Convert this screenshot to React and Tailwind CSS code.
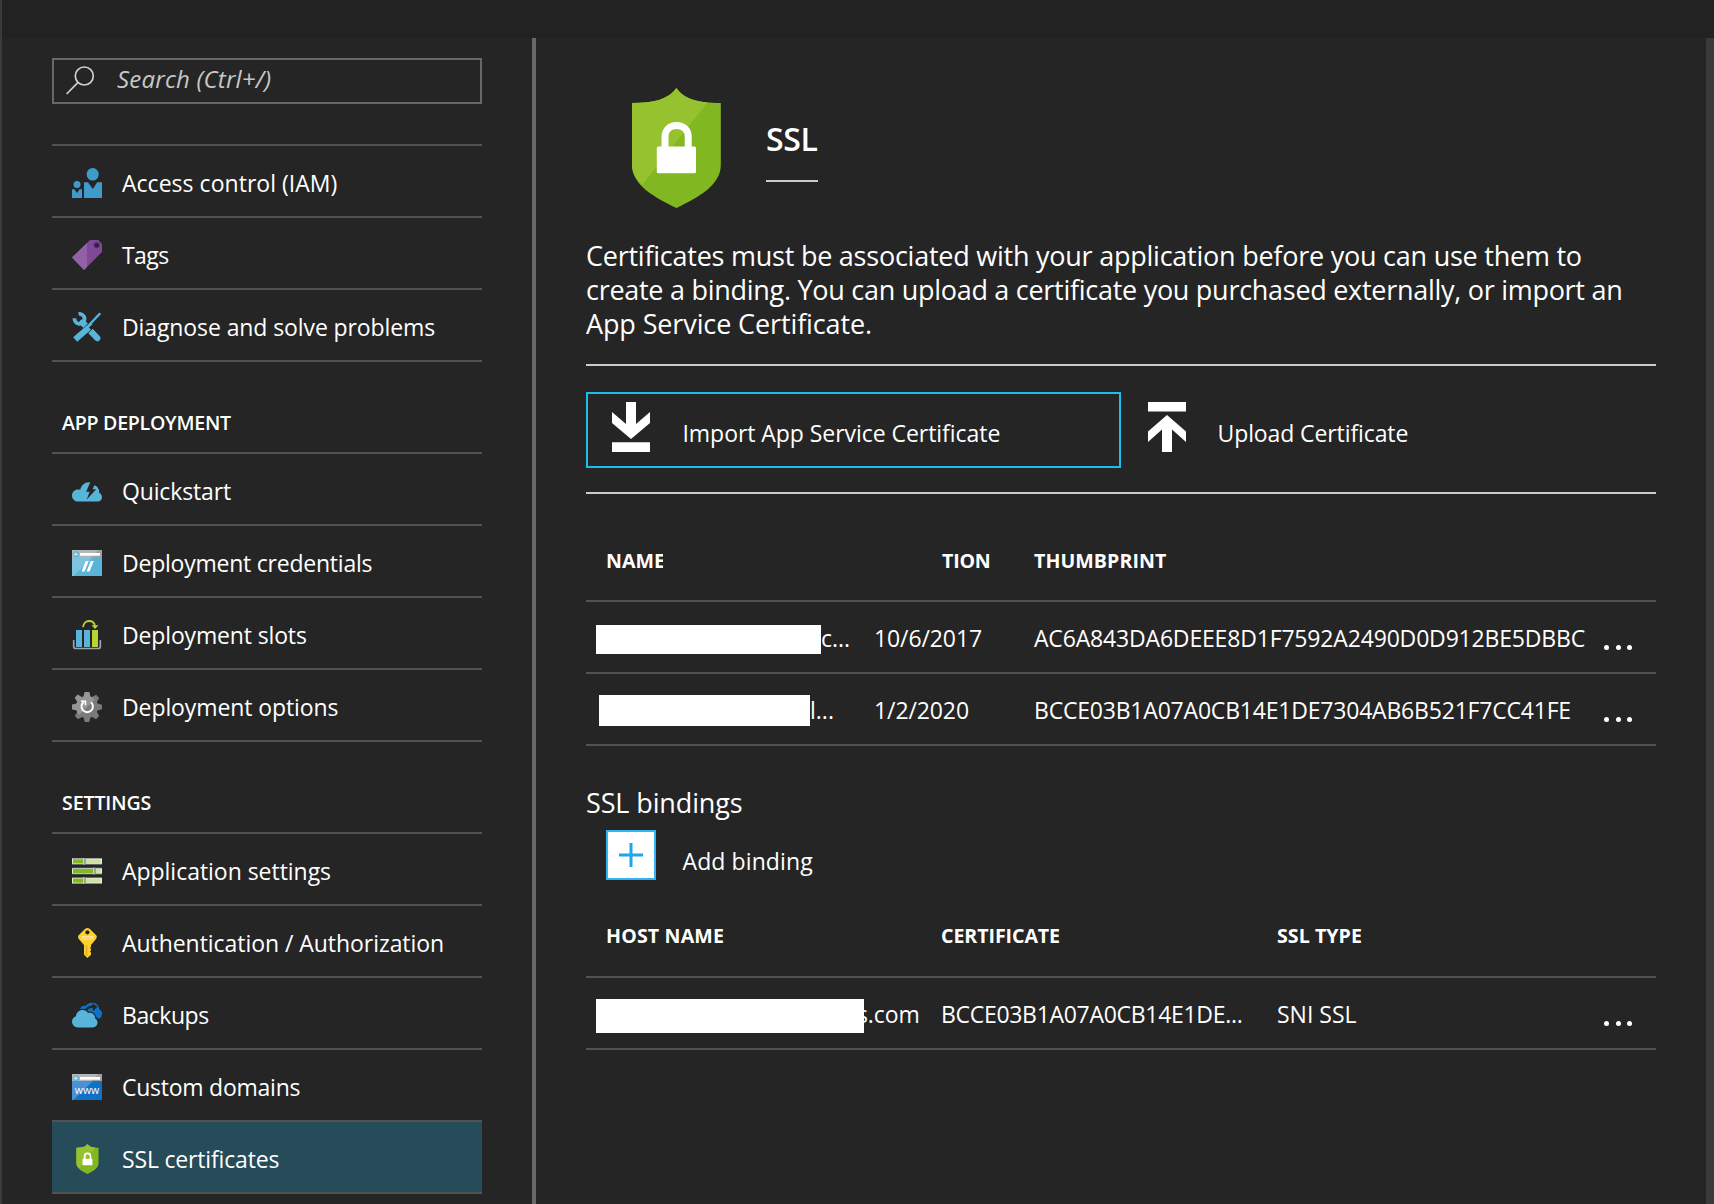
import React from "react";

const Search = () => (
  <svg width="30" height="30" viewBox="0 0 30 30" fill="none" stroke="#d0d0d0" strokeWidth="1.7">
    <circle cx="19.3" cy="10" r="9" />
    <path d="M12.8 16.7 1.6 28" />
  </svg>
);

const People = () => (
  <svg width="30" height="30" viewBox="0 0 30 30" fill="#3f9bc9">
    <ellipse cx="20.7" cy="6.3" rx="6" ry="6.3" />
    <path d="M12 14.3h4L20.8 21l4.4-6.700H30V30H12z" />
    <circle cx="5" cy="16.4" r="3.5" />
    <path d="M0 21.3h2.4L5 25l2.6-3.7H10V30H0z" />
  </svg>
);

const Tag = () => (
  <svg width="30" height="30" viewBox="0 0 30 30">
    <path d="M18 0h8.5L30 4.2V12L12 30 0 17.5z" fill="#804998" />
    <path d="M15 3v24l-3 3L0 17.5z" fill="#9160a6" />
    <circle cx="24.7" cy="5.3" r="3" fill="#55296b" />
    <circle cx="24.7" cy="5.3" r="1.8" fill="#252525" />
  </svg>
);

const Tools = () => (
  <svg width="30" height="30" viewBox="0 0 30 30" fill="none" stroke="#59b4d9">
    <path d="M2.6 6.2A5 5 0 1 0 6.600 2" strokeWidth="3.8" />
    <path d="M10.5 10.5 25.3 26.2" strokeWidth="6.2" strokeLinecap="round" />
    <path d="M12.5 17.6 19.5 10.6" stroke="#252525" strokeWidth="4" />
    <path d="M28.2 1.2 14.5 15.8" strokeWidth="2.4" />
    <path d="M19.6 13.8 12 21" stroke="#252525" strokeWidth="6" />
    <path d="M19.6 11.2 14.5 16" strokeWidth="2.6" />
    <path d="M17 15.4 3.2 27.6" strokeWidth="6" />
  </svg>
);

const Bolt = () => (
  <svg width="30" height="30" viewBox="0 0 30 30">
    <path
      d="M6.2 25.5C2.6 25.5 0 22.8 0 19.4c0-3.4 2.8-6 6-6 .8 0 1.6.1 2.3.4C9 9.6 12.6 6.2 17 6.2c1 0 1.3.1 2 .3L27 14.5c.4 1 .3 1.7.1 2.6 1.8.5 2.9 2.2 2.9 4.1 0 2.4-1.8 4.3-4.2 4.3z"
      fill="#59b4d9"
    />
    <path d="M22.2 8.8c2.8 1.3 4.8 3.7 5 7.2l-4-3z" fill="#59b4d9" />
    <path d="M18.5 5.5 14.2 15.8h3.5l-3 7.7 9.5-10.3h-3.7L23 8z" fill="#252525" />
  </svg>
);

const Browser = ({ body, light, children }) => (
  <svg width="30" height="30" viewBox="0 0 30 30">
    <path d="M0 2h30v7H0z" fill="#a0a1a2" />
    <path d="M0 2h26l-7 7H0z" fill="#b5b6b7" />
    <path d="M0 9h30v19H0z" fill={body} />
    <path d="M0 9h21L1.5 28H0z" fill={light} />
    <circle cx="4" cy="6.2" r="3" fill="#59b4d9" />
    <path d="M6 6.2H2.6M4.2 4.5 2.5 6.2l1.7 1.7" stroke="#fff" strokeWidth="0.9" fill="none" />
    <path d="M8 5h20v2.7H8z" fill="#fff" />
    {children}
  </svg>
);

const Slots = () => (
  <svg width="30" height="30" viewBox="0 0 30 30">
    <path d="M1.7 20v6.5a2 2 0 0 0 2 2h22.6a2 2 0 0 0 2-2V20" fill="none" stroke="#a0a1a2" strokeWidth="1.7" />
    <path d="M4 10h6v17H4zM12 10h6v17h-6z" fill="#59b4d9" />
    <path d="M20 10h6v17h-6z" fill="#b8d432" />
    <path d="M11 7.2C11.5 3.5 14 1 17 1s5.5 2 6 5" fill="none" stroke="#b8d432" strokeWidth="1.8" />
    <path d="M19.5 5.2h7L23 9z" fill="#b8d432" />
  </svg>
);

const Gear = () => (
  <svg width="30" height="30" viewBox="0 0 30 30">
    <g fill="#7a7a7a">
      <circle cx="15" cy="15" r="11" />
      {[0, 45, 90, 135, 180, 225, 270, 315].map((a) => (
        <path key={a} d="M12.8 0h4.4l1.6 5.5h-7.6z" transform={`rotate(${a} 15 15)`} />
      ))}
    </g>
    <path d="M22.8 7.3 7.3 22.8A11 11 0 0 1 4.4 18L0 17.2v-4.4l4.6-1.4 1-2.2-2.8-3.6 3-3 3.8 2.8 2-1L12.8 0h4.4l1.2 4.6z" fill="#969696" />
    <path d="M11.5 10.2A5.7 5.7 0 1 0 18.9 10.2" fill="none" stroke="#fff" strokeWidth="1.9" />
    <path d="M9 9.2h4.4v4" fill="none" stroke="#fff" strokeWidth="1.6" />
  </svg>
);

const Sliders = () => (
  <svg width="30" height="30" viewBox="0 0 30 30">
    {[
      [2, 11.5],
      [11.7, 21.5],
      [21.3, 11.5],
    ].map(([y, k]) => (
      <g key={y}>
        <rect x="0" y={y} width="30" height="6.6" fill="#8f9090" />
        <rect x="0" y={y + 0.8} width="30" height="5" fill="#e9f2db" />
        <rect x="1" y={y + 1.3} width="28" height="4" fill="#cde2a6" />
        <rect x="1" y={y + 1.3} width={k - 1.5} height="4" fill="#7fba20" />
        <rect x={k - 0.2} y={y} width="2.4" height="6.6" fill="#8f9090" />
        <rect x={k - 0.2} y={y} width="0.9" height="6.6" fill="#e0e0e0" />
      </g>
    ))}
  </svg>
);

const Key = () => (
  <svg width="30" height="30" viewBox="0 0 30 30">
    <path d="M15.3 0c1.5 0 2.6.8 3.6 1.9L24 7c1 1 1 2.6.2 3.7L19 17v2l-1 1 1 1v1.5l-1 1 1 1.2v2L15.4 30 12 26.7V17L6.6 10.7C5.8 9.6 5.9 8 6.9 7L12 1.9C13 .8 14 0 15.3 0z" fill="#fccf34" />
    <path d="M9.5 8h12v1.6h-12zM9.5 10.5h12v1h-12z" fill="#fde79a" />
    <path d="M13.8 17h1.5v11.5l-1.5-1.5z" fill="#e8ad1e" />
    <circle cx="15.4" cy="4.3" r="2.1" fill="#252525" />
  </svg>
);

const Clouds = () => (
  <svg width="30" height="30" viewBox="0 0 30 30">
    <path d="M8 10.5c0-3 2.5-5 5.4-4.6C15 3.6 18 2.3 21 2.7c3.6.5 6 3.3 6.3 6.6 1.7.8 2.7 2.6 2.7 4.5 0 2.3-1.2 4.2-3 5L17 13z" fill="#1072c6" />
    <path d="M11.5 13.5c2.5-5.5 7-7.4 11.5-7" fill="none" stroke="#252525" strokeWidth="2.3" />
    <path d="m20 3.2 5.5 3.5-4.5 4.5z" fill="#252525" />
    <path
      d="M6.2 27.5C2.6 27.5 0 24.9 0 21.6c0-2.7 1.7-4.7 4-5.4.3-3.8 3.2-6.2 6.6-6.2 2.3 0 4.3 1.2 5.4 2.9 3.6-.8 7.2 1.5 7.2 5.5 1.4.9 2.3 2.4 2.3 4.2 0 2.8-2.1 4.9-4.8 4.9z"
      fill="#59b4d9"
      stroke="#252525"
      strokeWidth="2.4"
      paintOrder="stroke"
    />
  </svg>
);

const Shield = ({ className }) => (
  <svg className={className} viewBox="0 0 89 120">
    <path d="M44.4 0C37 11 22 15 0 15v62c0 20 22 32 44.4 43C67 109 88.8 97 88.8 77V15C66 15 52 11 44.4 0z" fill="#81b721" />
    <path d="M44.4 0C37 11 22 15 0 15v62c0 7.5 4 14 10.5 19.6L75.5 14.4C60 13 50.5 9 44.4 0z" fill="#97c230" />
    <path d="M33 60V49c0-7.5 5-11.5 11.5-11.5S56.2 41.5 56.2 49v11" fill="none" stroke="#fff" strokeWidth="7" />
    <rect x="24.8" y="58.6" width="39.2" height="26.6" rx="1.5" fill="#fff" />
  </svg>
);

const ImportArrow = () => (
  <svg width="38" height="50" viewBox="0 0 38 50" fill="#fff">
    <path d="M14 0h10v22L38 10v11L19 37 0 21V10l14 12z" />
    <path d="M0 40.3h38V50H0z" />
  </svg>
);

const UploadArrow = () => (
  <svg width="38" height="50" viewBox="0 0 38 50" fill="#fff">
    <path d="M14 50h10V27.5L38 40V29.5L19 13 0 29.5V40l14-12.5z" />
    <path d="M0 0h38v9.5H0z" />
  </svg>
);

const NavRow = ({ icon, label, track, selected }) => (
  <li className={`flex h-[72px] items-center border-b-2 border-[#525252] pl-5 pt-1 ${selected ? "bg-[#264b59]" : ""}`}>
    <span className="flex w-[30px] justify-center">{icon}</span>
    <span className={`ml-5 whitespace-nowrap text-[23px] leading-10 ${track}`}>{label}</span>
  </li>
);

const NavHead = ({ children, track }) => (
  <h2 className={`flex h-[92px] items-center border-b-2 border-[#525252] pl-2.5 pt-[31px] text-[19.6px] font-semibold ${track}`}>
    {children}
  </h2>
);

const Dots = () => (
  <span className="flex gap-[6.5px] pt-[43px]">
    <i className="size-[5px] rounded-full bg-white" />
    <i className="size-[5px] rounded-full bg-white" />
    <i className="size-[5px] rounded-full bg-white" />
  </span>
);

export default function App() {
  return (
    <div className="flex h-[1204px] w-[1714px] flex-col overflow-hidden border-l-2 border-[#3a3a3a] bg-[#252525] font-['Open_Sans','Noto_Sans',sans-serif] text-white">
      <header className="h-[38px] shrink-0 bg-[#222222]" />
      <div className="flex min-h-0 flex-1">
        <aside className="w-[534px] shrink-0 border-r-4 border-[#686868] pl-[50px] pt-5">
          <div className="flex h-[46px] w-[430px] items-center border-2 border-[#686868] pl-[11px]">
            <Search />
            <span className="ml-[22px] whitespace-nowrap pb-1 text-[24px] italic leading-9 tracking-[0.2px] text-[#c8c8c8]">Search (Ctrl+/)</span>
          </div>
          <ul className="mt-10 w-[430px] border-t-2 border-[#525252]">
            <NavRow icon={<People />} track="tracking-[0.03px]" label="Access control (IAM)" />
            <NavRow icon={<Tag />} track="tracking-[-0.6px]" label="Tags" />
            <NavRow icon={<Tools />} track="tracking-[-0.1px]" label="Diagnose and solve problems" />
          </ul>
          <div className="w-[430px]">
            <NavHead track="tracking-[-0.27px]">APP DEPLOYMENT</NavHead>
            <ul>
              <NavRow icon={<Bolt />} track="tracking-[-0.15px]" label="Quickstart" />
              <NavRow
                icon={
                  <Browser body="#59b4d9" light="#7cc3e1">
                    <path d="M13.8 13h3l-4.3 10.5h-3zM18.8 13h3l-4.3 10.5h-3z" fill="#fff" />
                  </Browser>
                }
                track="tracking-[-0.23px]"
                label="Deployment credentials"
              />
              <NavRow icon={<Slots />} track="tracking-[-0.15px]" label="Deployment slots" />
              <NavRow icon={<Gear />} track="tracking-[-0.1px]" label="Deployment options" />
            </ul>
          </div>
          <div className="w-[430px]">
            <NavHead track="tracking-[-0.13px]">SETTINGS</NavHead>
            <ul>
              <NavRow icon={<Sliders />} track="tracking-[-0.03px]" label="Application settings" />
              <NavRow icon={<Key />} track="tracking-[-0.05px]" label="Authentication / Authorization" />
              <NavRow icon={<Clouds />} track="tracking-[-0.45px]" label="Backups" />
              <NavRow
                icon={
                  <Browser body="#1072c6" light="#4a90d2">
                    <text x="15" y="21.5" textAnchor="middle" fontSize="10.5" fill="#fff">www</text>
                  </Browser>
                }
                track="tracking-[-0.25px]"
                label="Custom domains"
              />
              <NavRow icon={<Shield className="h-[30px] w-[23px]" />} track="tracking-[-0.17px]" label="SSL certificates" selected />
            </ul>
          </div>
        </aside>

        <main className="flex-1 pl-[50px]">
          <div className="w-[1070px]">
            <div className="flex items-start pl-[46px] pt-[50px]">
              <Shield className="h-[120px] w-[89px]" />
              <h1 className="ml-[45px] mt-[31px] w-[52px] whitespace-nowrap border-b-2 border-[#cccccc] pb-[21px] text-[32px] font-semibold leading-10 tracking-[-0.3px]">
                SSL
              </h1>
            </div>
            <p className="mt-[31px] whitespace-nowrap text-[27px] leading-[34px]">
              <span className="tracking-[-0.24px]">Certificates must be associated with your application before you can use them to</span>
              <br />
              <span className="tracking-[-0.28px]">create a binding. You can upload a certificate you purchased externally, or import an</span>
              <br />
              <span className="tracking-[-0.12px]">App Service Certificate.</span>
            </p>
            <div className="mt-[23px] flex h-[130px] border-y-2 border-[#cccccc] pt-[26px] text-[23px] leading-10">
              <button className="flex h-[76px] w-[535px] items-start border-2 border-[#1ebbee] pl-6 pt-2">
                <ImportArrow />
                <span className="ml-[32.5px] mt-[11px] tracking-[-0.05px]">Import App Service Certificate</span>
              </button>
              <button className="flex items-start pl-[27px] pt-2.5">
                <UploadArrow />
                <span className="ml-[31.5px] mt-[11px] tracking-[-0.1px]">Upload Certificate</span>
              </button>
            </div>

            <div className="grid h-[108px] grid-cols-[288px_160px_570px_1fr] border-b-2 border-[#525252] pt-[47px] text-[19.6px] font-bold leading-10">
              <span className="ml-5 w-[57px] overflow-hidden whitespace-nowrap">NAME</span>
              <span className="pl-[68px] tracking-[-0.2px]">TION</span>
              <span className="tracking-[0.05px]">THUMBPRINT</span>
            </div>
            <div className="grid h-[72px] grid-cols-[288px_160px_570px_1fr] border-b-2 border-[#525252] text-[23px] leading-10">
              <span className="flex pl-2.5">
                <i className="mt-[23px] h-[29px] w-[225px] bg-white" />
                <span className="mt-4">c...</span>
              </span>
              <span className="mt-4 tracking-[-0.1px]">10/6/2017</span>
              <span className="mt-4 tracking-[-0.17px]">AC6A843DA6DEEE8D1F7592A2490D0D912BE5DBBC</span>
              <Dots />
            </div>
            <div className="grid h-[72px] grid-cols-[288px_160px_570px_1fr] border-b-2 border-[#525252] text-[23px] leading-10">
              <span className="flex pl-[13px]">
                <i className="mt-[21px] h-[31px] w-[211px] bg-white" />
                <span className="mt-4">l...</span>
              </span>
              <span className="mt-4 tracking-[-0.1px]">1/2/2020</span>
              <span className="mt-4 tracking-[-0.2px]">BCCE03B1A07A0CB14E1DE7304AB6B521F7CC41FE</span>
              <Dots />
            </div>

            <h2 className="mt-10 text-[27px] leading-[34px] tracking-[-0.12px]">SSL bindings</h2>
            <button className="mt-2.5 flex h-[50px] items-start pl-5 text-[23px] leading-10">
              <span className="flex size-[50px] items-center justify-center border-2 border-[#35b2f2] bg-white">
                <svg width="24" height="28" viewBox="0 0 24 28" stroke="#1fa5ec" strokeWidth="3">
                  <path d="M12 2v24M0 14h24" />
                </svg>
              </span>
              <span className="ml-[26.5px] mt-[11px] tracking-[0.1px]">Add binding</span>
            </button>

            <div className="grid h-[98px] grid-cols-[355px_336px_327px_1fr] border-b-2 border-[#525252] pt-9 text-[19.6px] font-bold leading-10">
              <span className="pl-5 tracking-[0.15px]">HOST NAME</span>
              <span className="tracking-[-0.07px]">CERTIFICATE</span>
              <span className="tracking-[0.05px]">SSL TYPE</span>
            </div>
            <div className="grid h-[72px] grid-cols-[355px_336px_327px_1fr] border-b-2 border-[#525252] text-[23px] leading-10">
              <span className="flex pl-2.5">
                <i className="z-10 mt-[21px] h-[34px] w-[268px] bg-white" />
                <span className="-ml-[7px] mt-4 tracking-[-0.1px]">s.com</span>
              </span>
              <span className="mt-4 tracking-[-0.3px]">BCCE03B1A07A0CB14E1DE...</span>
              <span className="mt-4">SNI SSL</span>
              <Dots />
            </div>
          </div>
        </main>
        <div className="w-2 shrink-0 bg-[#3a3a3c]" />
      </div>
    </div>
  );
}
